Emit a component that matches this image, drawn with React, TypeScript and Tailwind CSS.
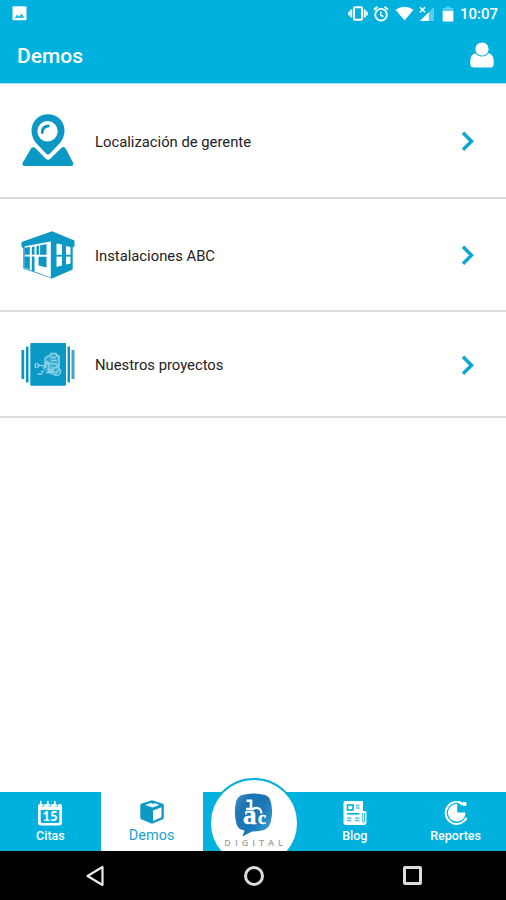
import type { ReactNode } from 'react'

type Row = { readonly label: string; readonly height: string; readonly icon: ReactNode }
type Tab = { readonly label: string; readonly icon: ReactNode; readonly active?: boolean }

function PinIcon() {
  return (
    <svg width="52" height="53" viewBox="0 0 52 53" fill="#0c98c5">
      <path d="M9 34.500.8 48.500Q-.8 52 2.800 52H49Q52.500 52 51 48.500L44 35Q42 31.500 39 34.200L28.500 44.500Q26 47 23.500 44.500L13.500 34.200Q11 32 9 34.500Z" />
      <path d="M26 .3C16.500.3 9.500 7.500 9.500 16.700 9.500 21.500 11.500 26 14.500 29.500L24 39.500Q26 41.500 28 39.500L37.500 29.500C40.500 26 42.500 21.500 42.500 16.700 42.500 7.500 35.500.3 26 .3Z" />
      <circle cx="25.500" cy="17.300" r="10.200" fill="#fff" />
      <path d="M20.200 18.500Q20.300 12.300 26.300 12" fill="none" stroke="#0c98c5" strokeWidth="2.800" strokeLinecap="round" />
    </svg>
  )
}

function BuildingIcon() {
  return (
    <svg width="54" height="48" viewBox="0 0 54 48">
      <path d="M31 .3 53.500 9.500V15.500L51.700 16.500V38.500L31 47.500 2.300 37.500V17L.5 16V11Z" fill="#0c98c5" />
      <path d="M3.700 15.300 29.800 10.500V46.500L3.700 37Z" fill="#fff" />
      <path d="M3.700 16.800 8.800 16V23.700H3.700ZM3.700 25.500H8.800V38.500L3.700 36.500ZM10.800 25.500H13.500V40.500L10.800 39.800ZM10.800 16 13.500 15.500V23.700H10.800ZM15.500 15 25.500 13V23.800H15.500ZM17.500 25.800H25.500V36.500L17.500 34.500Z" fill="#0c98c5" />
      <path d="M18.500 14V24" stroke="#fff" strokeWidth="1.200" />
      <path d="M35.500 12.500 41 13.500V34.500L35.500 36ZM45 15 49.500 16V32.500L45 33.500Z" fill="#fff" />
      <path d="M35 24.700H50" stroke="#0c98c5" strokeWidth="1.800" />
    </svg>
  )
}

function ProjectsIcon() {
  return (
    <svg width="54" height="43" viewBox="0 0 54 43">
      <g fill="#0c98c5">
        <rect x="9.300" y="0" width="35.700" height="42.700" rx=".8" />
        <rect x="5" y="3.500" width="2.500" height="36" rx=".5" />
        <rect x=".4" y="7" width="2.800" height="29" rx=".5" />
        <rect x="46.500" y="3.500" width="2.500" height="36" rx=".5" />
      </g>
      <rect x="50.500" y="7" width="3" height="29" rx=".5" fill="#4a9fd0" />
      <path d="M24 15 30 10.500H36L38.500 15V24L40 28 35 32.500 28 30 23 27Z" fill="#8fd3ea" opacity=".3" />
      <g fill="none" stroke="#8fd3ea" strokeWidth="1.500">
        <path d="M14.500 20V25M16 20.200 18.500 22.500 16 24.800M16.500 31H21.500M20 28.500H23M19.500 22.500H24L27 18M22 25.500 26 23" />
        <path d="M23.500 15.500 27 13H29L30 10.500H35L36 13H38V24M24 16V20L28 21V28.500H33M29.500 14.500H35M30 17.500H36M27 20 36 21.500V25M26 26.500H33M25 29.500H30V31.500" />
        <circle cx="35.500" cy="28.500" r="4" />
        <path d="M33.500 28.500 35 30 38 26.500M30 23.500 33 25.500" />
      </g>
    </svg>
  )
}

function CalendarIcon() {
  return (
    <svg width="26" height="26" viewBox="0 0 26 26">
      <path d="M3 4H23Q25 4 25 6V22.500Q25 25.500 22 25.500H4Q1 25.500 1 22.500V6Q1 4 3 4Z" fill="#fff" />
      <path d="M3.700 10H22.300V21.500Q22.300 23 20.800 23H5.200Q3.700 23 3.700 21.500Z" fill="#00b1dd" />
      <g fill="none" stroke="#00b1dd" strokeWidth="3.400" strokeLinecap="round">
        <path d="M5.700 3V5M12.700 3V5M19.700 3V5" />
      </g>
      <path d="M3.800 1.500Q3.300 5 5.800 5.300M10.800 1.500Q10.300 5 12.800 5.300M17.800 1.500Q17.300 5 19.800 5.300" fill="none" stroke="#fff" strokeWidth="1.700" strokeLinecap="round" />
      <text x="13" y="21" textAnchor="middle" fontSize="13" fontWeight="900" fontFamily="Lato, sans-serif" fill="#fff">15</text>
    </svg>
  )
}

function BoxIcon() {
  return (
    <svg className="-mt-[3px]" width="24" height="24" viewBox="0 0 24 24">
      <path d="M12 .3 22.800 3.800Q23.800 4.300 23.800 5.500V17.500Q23.800 18.800 22.800 19.300L12 23.700 1.300 19.300Q.3 18.800.3 17.500V5.500Q.3 4.300 1.200 3.800Z" fill="#0c98c5" />
      <path d="M5 5 10.500 3 13 3.800 15.500 3.300 19.500 5 12.500 7.600Z" fill="#fff" opacity=".9" />
      <path d="M13 10.500 21.500 7.200V17.300L13 21Z" fill="#fff" />
    </svg>
  )
}

function NewsIcon() {
  return (
    <svg width="24" height="24" viewBox="0 0 24 24">
      <path d="M2 0H19Q20 0 20 1V10H22Q23.500 10 23.500 11.500V21Q23.500 24 20.500 24H3Q.5 24 .5 21.500V1.500Q.5 0 2 0Z" fill="#fff" />
      <g fill="none" stroke="#00b1dd">
        <rect x="4.500" y="4" width="5.500" height="5" strokeWidth="1.600" />
        <path d="M13 4.500H16.500M13 7H16.500" strokeWidth="1.300" opacity=".8" />
        <path d="M4 12.800H16.500" strokeWidth="1.600" />
        <path d="M4 17H8.500M4 19.500H8.500M12 17H16.500M12 19.500H16.500" strokeWidth="1.700" opacity=".7" />
        <path d="M19.700 12V20.500Q19.700 21.700 20.600 21.700T21.500 20.500V12" strokeWidth=".8" />
      </g>
    </svg>
  )
}

function ChartIcon() {
  return (
    <svg width="24" height="26" viewBox="0 0 24 26">
      <path d="M18.500 3.600A11 11 0 1 0 21.500 19.500" fill="none" stroke="#fff" strokeWidth="1.900" />
      <path d="M13.200 4V12.500H21.500A8.800 8.800 0 1 1 13.200 4Z" fill="#fff" />
      <path d="M14.500 1.800 18.500 4.500" stroke="#fff" strokeWidth="2.400" />
      <circle cx="20.500" cy="3.900" r="2.200" fill="#fff" />
      <circle cx="21.800" cy="19" r="1.400" fill="#fff" />
    </svg>
  )
}

function UserIcon() {
  return (
    <svg width="24" height="26" viewBox="0 0 24 26" fill="#fff">
      <path d="M5 11.300Q8 14.500 12 14.500T19 11.300Q23.700 12.500 23.700 20V22Q23.700 25.500 20 25.500H4Q.3 25.500.3 22V20Q.3 12.500 5 11.300Z" />
      <circle cx="12" cy="7" r="6.600" />
    </svg>
  )
}

function Logo() {
  return (
    <svg width="40" height="44" viewBox="0 0 40 44">
      <defs>
        <linearGradient id="bubble" x1="0" y1="0" x2="1" y2=".7">
          <stop offset="0" stopColor="#3f92c4" />
          <stop offset=".3" stopColor="#1d74b2" />
          <stop offset=".65" stopColor="#1b76b6" />
          <stop offset="1" stopColor="#3199cf" />
        </linearGradient>
      </defs>
      <path d="M8 2Q19-1 31 2 35.500 3.500 36.500 8 39 16 37.500 25 36.500 34.500 30 37 24 38.500 18 38.500L8.500 43.500 10.500 37.500Q4 36.500 2.500 31-.5 20 2 9 3.500 3.500 8 2Z" fill="url(#bubble)" />
      <g fill="#fff" stroke="#fff" strokeWidth=".4" fontFamily="Liberation Serif, serif" fontWeight="700">
        <text x="9" y="31" fontSize="27">a</text>
        <text x="24" y="31" fontSize="18">c</text>
      </g>
      <path d="M12.500 7.700H17V16M12 16H20.500" fill="none" stroke="#fff" strokeWidth="2.600" />
      <path d="M19.500 15.200Q27.500 13.800 27.500 20.500" fill="none" stroke="#fff" strokeWidth="2.200" />
    </svg>
  )
}

const ROWS: ReadonlyArray<Row> = [
  { label: 'Localización de gerente', height: 'h-[115px]', icon: <PinIcon /> },
  { label: 'Instalaciones ABC', height: 'h-[113px]', icon: <BuildingIcon /> },
  { label: 'Nuestros proyectos', height: 'h-[106px]', icon: <ProjectsIcon /> },
]

const LEFT_TABS: ReadonlyArray<Tab> = [
  { label: 'Citas', icon: <CalendarIcon /> },
  { label: 'Demos', icon: <BoxIcon />, active: true },
]

const RIGHT_TABS: ReadonlyArray<Tab> = [
  { label: 'Blog', icon: <NewsIcon /> },
  { label: 'Reportes', icon: <ChartIcon /> },
]

function StatusBar() {
  return (
    <div className="flex h-[27px] items-center pr-2 pl-3 text-white">
      <svg width="15" height="15" viewBox="0 0 15 15">
        <rect x=".5" y=".3" width="14" height="14" rx="1" fill="#fff" />
        <path d="M2.500 12 5.300 8.500 7 10.500 9.500 7.500 12.500 12Z" fill="#00b1dd" opacity=".85" />
      </svg>
      <svg className="ml-auto" width="20" height="15" viewBox="0 0 20 15" fill="none" stroke="#fff">
        <rect x="6" y="1.200" width="8" height="12.600" rx="1" strokeWidth="2.100" />
        <path d="M3.200 3.500V11.500M16.800 3.500V11.500" strokeWidth="2" />
        <path d="M1.100 5.500V9.500M18.900 5.500V9.500" strokeWidth="1.700" />
      </svg>
      <svg className="ml-[5px]" width="16" height="16" viewBox="0 0 16 16" fill="none" stroke="#fff">
        <circle cx="8" cy="8.700" r="5.800" strokeWidth="1.900" />
        <path d="M.9 3.800 4.500.8M15.100 3.800 11.500.8" strokeWidth="1.900" />
        <path d="M7.800 5.500V9.200L10.500 10.700" strokeWidth="1.500" />
      </svg>
      <svg className="ml-[6px]" width="19" height="15" viewBox="0 0 19 15">
        <path d="M.5 3.800Q9.500-2.500 18.500 3.800L9.500 14.500Z" fill="#fff" />
      </svg>
      <svg className="ml-[5px]" width="16" height="16" viewBox="0 0 16 16">
        <path d="M15 1V15H1Z" fill="#fff" opacity=".35" />
        <path d="M9.800 6.200V15H1Z" fill="#fff" />
        <path d="M1 1.300 6 6.300M6 1.300 1 6.300" stroke="#fff" strokeWidth="1.500" />
      </svg>
      <svg className="ml-[7px]" width="12" height="16" viewBox="0 0 12 16">
        <path d="M4 .5H8V2H10.500Q11.300 2 11.300 3V15.500H.7V3Q.7 2 1.500 2H4Z" fill="#fff" opacity=".35" />
        <path d="M.7 5H11.300V14.500Q11.300 15.500 10.300 15.500H1.700Q.7 15.500.7 14.500Z" fill="#fff" />
      </svg>
      <span className="ml-[6px] pt-[2px] text-[15px] leading-none font-medium">10:07</span>
    </div>
  )
}

function TabItem({ label, icon, active }: Tab) {
  return (
    <div
      className={
        active
          ? 'flex w-[102px] flex-col items-center bg-white pt-[8px] text-[14.5px] text-[#1ba3cf]'
          : 'flex w-[101px] flex-col items-center bg-[#00b1dd] pt-[8px] text-[12.5px] font-medium text-white'
      }
    >
      <div className="flex h-[26px] items-center">{icon}</div>
      <span className="mt-[2px] leading-4">{label}</span>
    </div>
  )
}

export default function App() {
  return (
    <div className="flex h-[900px] w-[506px] flex-col overflow-hidden bg-white font-[Roboto,sans-serif]">
      <header className="h-[84px] border-b border-[#a6e0f2] bg-[#00b1dd]">
        <StatusBar />
        <div className="flex h-[56px] items-center justify-between pr-3 pl-[17px]">
          <h1 className="pt-[3px] text-[21px] font-medium text-white">Demos</h1>
          <UserIcon />
        </div>
      </header>

      <main className="flex-1">
        {ROWS.map((row) => (
          <div key={row.label} className={`flex items-center border-b-2 border-[#dcdcdc] pr-8 pl-[21px] ${row.height}`}>
            <div className="flex w-[54px] justify-center">{row.icon}</div>
            <span className="ml-5 pt-[3px] text-[14.8px] text-[#222]">{row.label}</span>
            <svg className="mt-[2px] ml-auto" width="13" height="21" viewBox="0 0 13 21">
              <path d="M2 1.800 10.500 10.300 2 18.800" fill="none" stroke="#0ca6d2" strokeWidth="3.400" />
            </svg>
          </div>
        ))}
      </main>

      <nav className="flex h-[59px] shrink-0">
        {LEFT_TABS.map((tab) => (
          <TabItem key={tab.label} {...tab} />
        ))}
        <div className="relative w-[102px] bg-[#00b1dd]">
          <div className="absolute -top-[14px] left-0 h-[73px] w-[102px] overflow-hidden">
            <div className="mx-auto flex h-[90px] w-[90px] flex-col items-center rounded-full border-2 border-[#00b1dd] bg-white pt-[13px]">
              <Logo />
              <span className="mt-[1px] pl-[4px] font-['Open_Sans',sans-serif] text-[9px] leading-[10px] font-semibold tracking-[4px] text-[#a3a3a3]">
                DIGITAL
              </span>
            </div>
          </div>
        </div>
        {RIGHT_TABS.map((tab) => (
          <TabItem key={tab.label} {...tab} />
        ))}
      </nav>

      <footer className="flex h-[49px] shrink-0 items-center bg-black pl-[85px]">
        <svg width="20" height="22" viewBox="0 0 20 22">
          <path d="M17.500 2V20L2.500 11Z" fill="none" stroke="#e8e8e8" strokeWidth="2.200" strokeLinejoin="round" />
        </svg>
        <div className="ml-[139px] h-5 w-5 rounded-full border-3 border-[#dcdcdc]" />
        <div className="ml-[139px] h-[19px] w-[19px] rounded-[2px] border-3 border-[#dcdcdc]" />
      </footer>
    </div>
  )
}
